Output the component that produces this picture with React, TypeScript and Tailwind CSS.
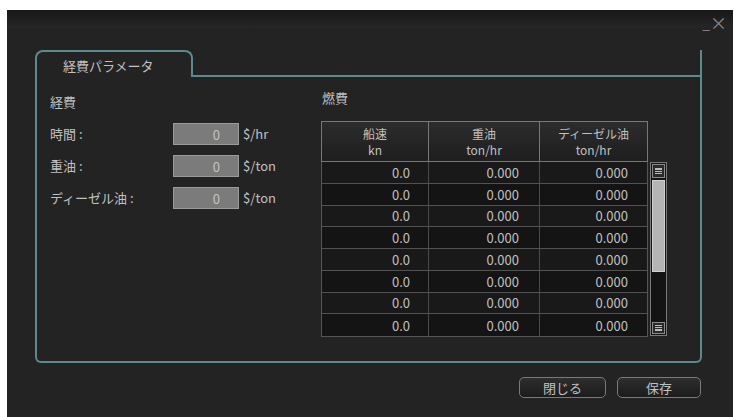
import React from "react";

const font = { fontFamily: '"Noto Sans CJK JP", "Noto Sans", sans-serif' };

const rows = Array.from({ length: 8 });

function Input() {
  return (
    <div className="w-[66px] h-[22px] bg-[#7b7b7b] border border-[#9a9a9a] flex items-center justify-end pr-[18px] text-[13px] text-[#c4c4c4] leading-none">
      0
    </div>
  );
}

export default function App() {
  return (
    <div className="w-[735px] h-[417px] bg-white overflow-hidden" style={font}>
      <div className="ml-[7px] mt-[10px] w-[726px] h-[407px] bg-[#232323] flex flex-col text-[#c0c0c0]">
        {/* title bar */}
        <div className="h-[18px] bg-gradient-to-b from-[#181818] to-[#262626] flex justify-end items-end pr-[6px] text-[#8a8a8a] leading-none">
          <span className="text-[14px] mb-[-2px]">_</span>
          <span className="text-[17px] mb-[-3px]">×</span>
        </div>

        {/* panel */}
        <div className="ml-[28px] mt-[22px] w-[667px] flex flex-col">
          <div className="flex h-[27px]">
            <div className="w-[158px] border-t-2 border-l-2 border-r-2 border-[#5b8a8f] rounded-t-[8px] flex items-start pl-[26px] pt-[7px] text-[13px] leading-none">
              経費パラメータ
            </div>
            <div className="flex-1 border-b-2 border-r-2 border-[#5b8a8f]"></div>
          </div>
          <div className="h-[286px] border-l-2 border-r-2 border-b-2 border-[#5b8a8f] rounded-b-[6px] flex">
            {/* left */}
            <div className="w-[284px] pl-[13px] pt-[17px] flex flex-col">
              <div className="text-[13px] leading-[16px]">経費</div>
              <div className="mt-[13px] flex flex-col gap-[10px]">
                {[
                  ["時間 :", "$/hr"],
                  ["重油 :", "$/ton"],
                  ["ディーゼル油 :", "$/ton"],
                ].map(([l, u]) => (
                  <div key={l} className="flex items-center h-[22px] text-[13px]">
                    <div className="w-[123px]">{l}</div>
                    <Input />
                    <div className="ml-[4px]">{u}</div>
                  </div>
                ))}
              </div>
            </div>
            {/* right */}
            <div className="pt-[13px] flex flex-col">
              <div className="text-[13px] leading-[16px] ml-[1px]">燃費</div>
              <div className="mt-[15px] flex items-start gap-[2px]">
                <div className="flex flex-col">
                  <div className="flex h-[41px] border border-[#777] bg-gradient-to-b from-[#2c2c2c] to-[#1e1e1e] text-[12px] leading-[16px] text-center">
                    <div className="w-[107px] border-r border-[#777] flex flex-col justify-center">
                      <span>船速</span><span>kn</span>
                    </div>
                    <div className="w-[111px] border-r border-[#777] flex flex-col justify-center">
                      <span>重油</span><span>ton/hr</span>
                    </div>
                    <div className="w-[107px] flex flex-col justify-center">
                      <span>ディーゼル油</span><span>ton/hr</span>
                    </div>
                  </div>
                  <div className="border-l border-r border-b border-[#555]">
                    {rows.map((_, i) => (
                      <div
                        key={i}
                        className={`flex h-[21.75px] items-center text-[13px] leading-none border-b border-[#525252] last:border-b-0 ${i % 2 === 0 ? "bg-[#191919]" : "bg-[#141414]"}`}
                      >
                        <div className="w-[107px] h-full flex items-center justify-end pr-[18px] border-r border-[#4a4a4a]">0.0</div>
                        <div className="w-[111px] h-full flex items-center justify-end pr-[20px] border-r border-[#4a4a4a]">0.000</div>
                        <div className="w-[107px] h-full flex items-center justify-end pr-[19px]">0.000</div>
                      </div>
                    ))}
                  </div>
                </div>
                {/* scrollbar */}
                <div className="mt-[41px] w-[17px] h-[174px] border border-[#7a7a7a] bg-[#141414] flex flex-col p-[1px]">
                  <div className="h-[14px] border border-[#8a8a8a] bg-[#2a2a2a] flex flex-col items-center justify-center gap-[1px]">
                    <div className="w-[7px] h-[2px] bg-[#bbb]"></div>
                    <div className="w-[7px] h-[1px] bg-[#bbb]"></div>
                    <div className="w-[7px] h-[1px] bg-[#bbb]"></div>
                  </div>
                  <div className="mt-[2px] h-[92px] bg-[#b4b4b4] border border-[#d0d0d0]"></div>
                  <div className="flex-1"></div>
                  <div className="h-[12px] border border-[#8a8a8a] bg-[#2a2a2a] flex flex-col items-center justify-center gap-[1px]">
                    <div className="w-[7px] h-[1px] bg-[#bbb]"></div>
                    <div className="w-[7px] h-[1px] bg-[#bbb]"></div>
                    <div className="w-[7px] h-[2px] bg-[#bbb]"></div>
                  </div>
                </div>
              </div>
            </div>
          </div>
        </div>

        {/* buttons */}
        <div className="mt-[14px] flex justify-end gap-[11px] pr-[32px]">
          <button className="w-[87px] h-[21px] rounded-[5px] border border-[#7a7a7a] bg-gradient-to-b from-[#2e2e2e] to-[#1c1c1c] text-[13px] text-[#c0c0c0] leading-none">
            閉じる
          </button>
          <button className="w-[84px] h-[21px] rounded-[5px] border border-[#7a7a7a] bg-gradient-to-b from-[#2e2e2e] to-[#1c1c1c] text-[13px] text-[#c0c0c0] leading-none">
            保存
          </button>
        </div>
      </div>
    </div>
  );
}
